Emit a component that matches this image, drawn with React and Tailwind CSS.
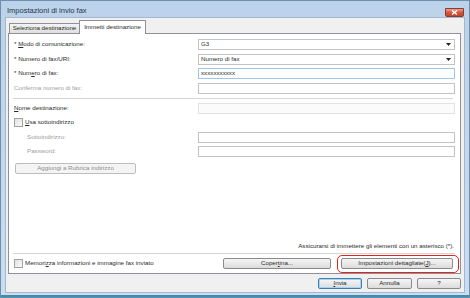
import React from "react";

function Btn({ children, className = "", disabled = false, focused = false }) {
  return (
    <div
      className={
        "flex items-center justify-center h-[11px] rounded-[2px] border leading-none " +
        (disabled
          ? "border-[#bdbdbd] bg-[#f4f4f4] text-[#8d8d8d] "
          : focused
          ? "border-[#3c7fb1] bg-gradient-to-b from-[#f6f6f6] to-[#dcdcdc] text-[#2a2a2a] shadow-[inset_0_0_0_1px_#a6d4f2] "
          : "border-[#8a8a8a] bg-gradient-to-b from-[#f6f6f6] to-[#dcdcdc] text-[#2a2a2a] ") +
        className
      }
    >
      {children}
    </div>
  );
}

function Box({ children, variant = "normal", select = false }) {
  const cls =
    variant === "focus"
      ? "border-[#9cc6ea] bg-white"
      : variant === "disabled"
      ? "border-[#e2e2e2] bg-[#fbfbfb]"
      : "border-[#c3c3c3] bg-white";
  return (
    <div className={"flex-1 h-[11px] border flex items-center pl-[2px] pr-[3px] text-[#2a2a2a] " + cls}>
      <span className="flex-1 truncate leading-none">{children}</span>
      {select && (
        <svg width="5" height="3" viewBox="0 0 5 3" className="shrink-0">
          <path d="M0 0H5L2.5 3Z" fill="#222" />
        </svg>
      )}
    </div>
  );
}

function Row({ label, gray = false, indent = false, className = "", children }) {
  return (
    <div className={"flex items-center h-[11px] " + className}>
      <div
        className={
          "w-[184px] shrink-0 leading-none " +
          (gray ? "text-[#a0a0a0] " : "text-[#2a2a2a] ") +
          (indent ? "pl-[13px]" : "")
        }
      >
        {label}
      </div>
      {children}
    </div>
  );
}

function Check({ label }) {
  return (
    <div className="flex items-center gap-[2px]">
      <div className="w-[9px] h-[9px] border border-[#a0a0a0] bg-gradient-to-br from-[#e2e2e2] to-[#fafafa]" />
      <span className="leading-none text-[#2a2a2a]">{label}</span>
    </div>
  );
}

export default function App() {
  return (
    <div className="w-[470px] h-[298px] flex flex-col bg-gradient-to-b from-[#bcd2ea] to-[#cbddf0] border border-[#6f8eac] font-['Liberation_Sans',Arial,sans-serif] text-[6.2px] overflow-hidden">
      {/* Title bar */}
      <div className="h-[16px] shrink-0 flex items-start">
        <span className="pl-[6px] pt-[5px] text-[7.5px] leading-[10px] text-[#24364a]">
          Impostazioni di invio fax
        </span>
        <div className="ml-auto mr-[5px] mt-[7px] w-[19px] h-[9px] rounded-b-[2px] border border-[#8a3a30] bg-gradient-to-b from-[#e8a493] via-[#d2553e] to-[#c8442b] flex items-center justify-center">
          <svg width="7" height="5" viewBox="0 0 7 5">
            <path d="M1 0.5L6 4.5M6 0.5L1 4.5" stroke="#fff" strokeWidth="1.4" />
          </svg>
        </div>
      </div>

      {/* Client area */}
      <div className="mx-[4px] h-[276px] shrink-0 bg-[#f0f0f0] border border-[#a3b8ce] flex flex-col">
        {/* Tabs */}
        <div className="h-[13px] mt-[2px] pl-[3px] flex items-end shrink-0">
          <div className="w-[71px] h-[10px] border border-b-0 border-[#8e9199] bg-gradient-to-b from-[#f4f4f4] to-[#dfdfdf] flex items-center justify-center leading-none text-[#2a2a2a]">
            Seleziona destinazione
          </div>
          <div className="relative z-10 -ml-[1px] -mb-[1px] w-[67px] h-[14px] border border-b-0 border-[#8e9199] bg-white flex items-center justify-center leading-none text-[#2a2a2a]">
            Immetti destinazione
          </div>
        </div>

        {/* Panel */}
        <div className="ml-[2px] mr-[3px] h-[241px] shrink-0 border border-[#8e9199] bg-white flex flex-col pl-[5px] pr-[5px]">
          <Row label={<span>* <span className="underline">M</span>odo di comunicazione:</span>} className="mt-[5px]">
            <Box select>G3</Box>
          </Row>
          <Row label="* Numero di fax/URI:" className="mt-[4px]">
            <Box select>Numero di fax</Box>
          </Row>
          <Row label={<span>* Num<span className="underline">e</span>ro di fax:</span>} className="mt-[3px]">
            <Box variant="focus">xxxxxxxxxxx</Box>
          </Row>
          <Row label="Conferma numero di fax:" gray className="mt-[4px]">
            <Box />
          </Row>
          <div className="mt-[4px] -ml-[1px] mr-[2px] h-[2px] border-t border-[#d5d5d5] border-b border-b-white" />
          <Row label={<span><span className="underline">N</span>ome destinazione:</span>} className="mt-[3px]">
            <Box variant="disabled" />
          </Row>
          <div className="mt-[3px] h-[10px] flex items-center">
            <Check label={<span><span className="underline">U</span>sa sottoindirizzo</span>} />
          </div>
          <Row label="Sottoindirizzo:" gray indent className="mt-[5px]">
            <Box />
          </Row>
          <Row label="Password:" gray indent className="mt-[3px]">
            <Box />
          </Row>
          <Btn disabled className="mt-[6px] ml-[1px] w-[121px]">
            Aggiungi a Rubrica indirizzo
          </Btn>

          <div className="flex-1" />

          <div className="text-right leading-none text-[#2a2a2a] pr-[1px]">
            Assicurarsi di immettere gli elementi con un asterisco (*).
          </div>
          <div className="mt-[4px] -ml-[1px] mr-0 h-[2px] border-t border-[#d5d5d5] border-b border-b-white" />
          <div className="mt-[3px] mb-[4px] h-[11px] flex items-center">
            <Check label={<span>Memori<span className="underline">z</span>za informazioni e immagine fax inviato</span>} />
            <Btn className="ml-auto w-[108px]">
              <span>Coper<span className="underline">t</span>ina...</span>
            </Btn>
            <div className="relative ml-[10px] mr-[2px]">
              <Btn className="w-[112px]">Impostazioni dettagliate(<span className="underline">J</span>)...</Btn>
              <div className="absolute -left-[4px] -right-[6px] -top-[3px] -bottom-[4px] rounded-[5px] border-[1.5px] border-[#e0241f]" />
            </div>
          </div>
        </div>

        {/* Dialog buttons */}
        <div className="mt-[4px] pr-[3px] flex justify-end gap-[5px]">
          <Btn focused className="w-[44px]">
            <span><span className="underline">I</span>nvia</span>
          </Btn>
          <Btn className="w-[45px]">Annulla</Btn>
          <Btn className="w-[44px]">?</Btn>
        </div>
      </div>
      <div className="flex-1 border-b-[2px] border-[#3f8ab0]" />
    </div>
  );
}
